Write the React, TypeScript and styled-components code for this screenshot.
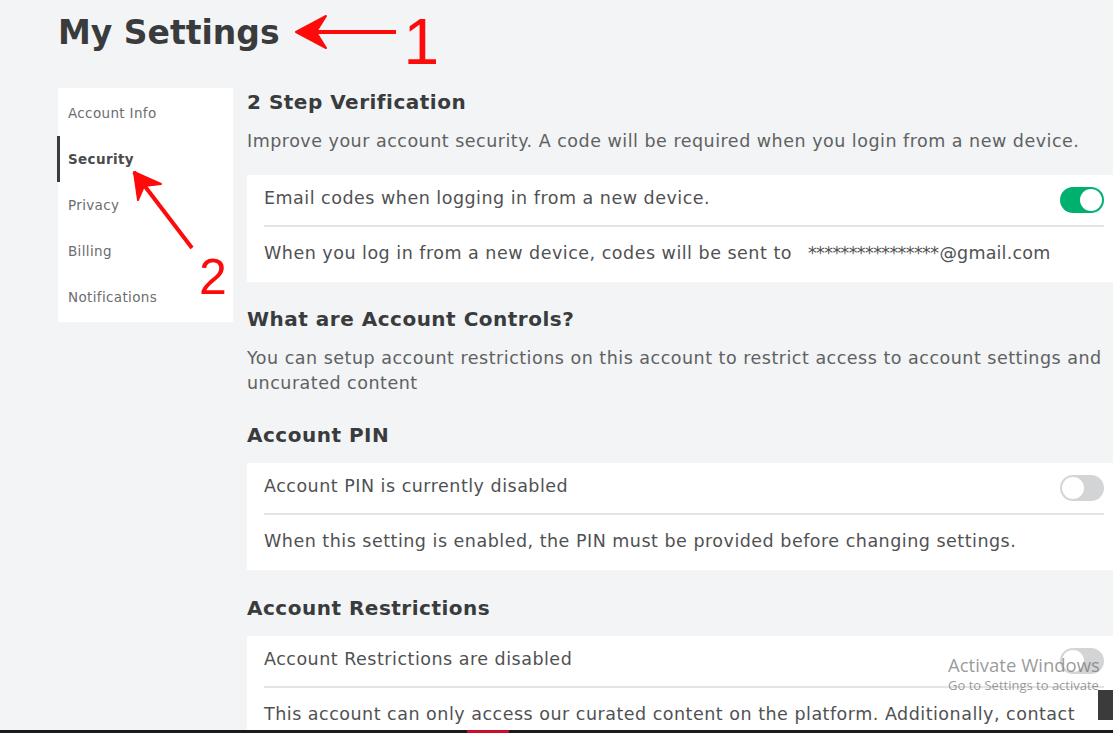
import React from "react";
import styled, { createGlobalStyle } from "styled-components";

const GlobalStyle = createGlobalStyle`
  html, body {
    margin: 0;
    padding: 0;
    background: #f2f4f5;
    overflow: hidden;
  }
  body {
    font-family: "DejaVu Sans", "Noto Sans", Arial, sans-serif;
    color: #393b3d;
  }
`;

const Page = styled.div`
  position: relative;
  width: 1113px;
  height: 733px;
  overflow: hidden;
  padding: 4px 0 0 58px;
  box-sizing: border-box;
`;

const TitleRow = styled.div`
  display: flex;
  align-items: center;
  height: 56px;
`;

const Title = styled.h1`
  margin: 0;
  font-size: 33px;
  font-weight: 700;
  color: #393b3d;
`;

const RedDigit = styled.span<{ size: number }>`
  color: #ff0a0a;
  font-family: "Liberation Sans", Arial, sans-serif;
  font-size: ${(p) => p.size}px;
  line-height: 1;
`;

const Layout = styled.div`
  display: flex;
  align-items: flex-start;
  margin-top: 28px;
  gap: 14px;
`;

const Sidebar = styled.nav`
  position: relative;
  width: 175px;
  background: #ffffff;
  padding: 2px 0;
  flex-shrink: 0;
`;

const NavItem = styled.div<{ active?: boolean }>`
  position: relative;
  height: 46px;
  display: flex;
  align-items: center;
  padding-left: 10px;
  font-size: 13.5px;
  letter-spacing: 0.35px;
  font-weight: ${(p) => (p.active ? 700 : 400)};
  color: ${(p) => (p.active ? "#4a4c4e" : "#6b6d6f")};
  &::before {
    content: "";
    display: ${(p) => (p.active ? "block" : "none")};
    position: absolute;
    left: -1px;
    top: 0;
    width: 3px;
    height: 46px;
    background: #393b3d;
  }
`;

const Content = styled.main`
  width: 870px;
  flex-shrink: 0;
`;

const Heading = styled.h2<{ top: number }>`
  margin: ${(p) => p.top}px 0 0;
  font-size: 20px;
  line-height: 28px;
  font-weight: 700;
  letter-spacing: 0.5px;
  color: #393b3d;
`;

const Description = styled.p`
  margin: 13px 0 0;
  font-size: 17.5px;
  line-height: 25px;
  color: #606162;
  letter-spacing: 0.5px;
`;

const Card = styled.section<{ top: number }>`
  margin-top: ${(p) => p.top}px;
  background: #ffffff;
  padding: 0 13px 0 17px;
`;

const Row = styled.div<{ divided?: boolean }>`
  display: flex;
  align-items: center;
  justify-content: space-between;
  height: ${(p) => (p.divided ? 52 : 55)}px;
  border-bottom: ${(p) => (p.divided ? "2px solid #e3e4e5" : "none")};
  font-size: 17.5px;
  color: #505153;
  letter-spacing: 0.5px;
  padding-bottom: 4px;
  box-sizing: border-box;
  white-space: nowrap;
`;

const Email = styled.span`
  margin-left: 16px;
  letter-spacing: 0.2px;
`;

const Mask = styled.span`
  letter-spacing: -0.6px;
  margin-right: 1px;
`;

const Toggle = styled.div<{ on?: boolean }>`
  position: relative;
  width: 44px;
  height: 26px;
  border-radius: 13px;
  background: ${(p) => (p.on ? "#00b06f" : "#d3d4d5")};
  flex-shrink: 0;
  margin-top: 4px;
  &::after {
    content: "";
    position: absolute;
    top: 2px;
    left: ${(p) => (p.on ? "20px" : "2px")};
    width: 22px;
    height: 22px;
    border-radius: 50%;
    background: #ffffff;
  }
`;

const Annotation = styled.svg`
  position: absolute;
  overflow: visible;
`;

const Watermark = styled.div`
  position: absolute;
  left: 948px;
  top: 653px;
  color: rgba(120, 120, 120, 0.75);
  font-family: "Open Sans", "Noto Sans", sans-serif;
  white-space: nowrap;
`;

const WatermarkTitle = styled.div`
  font-size: 18.5px;
  line-height: 23px;
`;

const WatermarkSub = styled.div`
  font-size: 13px;
  line-height: 18px;
`;

const CornerBox = styled.div`
  position: absolute;
  left: 1098px;
  top: 690px;
  width: 16px;
  height: 30px;
  background: #3b3b3b;
`;

const Taskbar = styled.div`
  position: absolute;
  left: 0;
  bottom: 0;
  width: 100%;
  height: 3px;
  background: #1b1b1b;
  &::after {
    content: "";
    position: absolute;
    left: 467px;
    width: 42px;
    height: 3px;
    background: #c4102a;
  }
`;

const navItems = ["Account Info", "Security", "Privacy", "Billing", "Notifications"];

export default function App() {
  return (
    <Page>
      <GlobalStyle />
      <TitleRow>
        <Title>My Settings</Title>
        <svg width="104" height="40" viewBox="0 0 104 40" style={{ marginLeft: 14 }}>
          <path d="M4 20 L102 20" stroke="#ff0a0a" strokeWidth="4" fill="none" />
          <path d="M32 4 L2 20 L32 36 L22 20 Z" fill="#ff0a0a" stroke="#ff0a0a" strokeWidth="2" strokeLinejoin="round" />
        </svg>
        <RedDigit size={64} style={{ marginLeft: 6, marginTop: 20 }}>1</RedDigit>
      </TitleRow>
      <Layout>
        <Sidebar>
          {navItems.map((item) => (
            <NavItem key={item} active={item === "Security"}>
              {item}
            </NavItem>
          ))}
        </Sidebar>
        <Content>
          <Heading top={0}>2 Step Verification</Heading>
          <Description>
            Improve your account security. A code will be required when you login from a new device.
          </Description>
          <Card top={21}>
            <Row divided>
              Email codes when logging in from a new device.
              <Toggle on />
            </Row>
            <Row>
              <span>
                When you log in from a new device, codes will be sent to
                <Email>
                  <Mask>****************</Mask>@gmail.com
                </Email>
              </span>
            </Row>
          </Card>
          <Heading top={23}>What are Account Controls?</Heading>
          <Description>
            You can setup account restrictions on this account to restrict access to account settings and
            <br />
            uncurated content
          </Description>
          <Heading top={25}>Account PIN</Heading>
          <Card top={14}>
            <Row divided>
              Account PIN is currently disabled
              <Toggle />
            </Row>
            <Row>When this setting is enabled, the PIN must be provided before changing settings.</Row>
          </Card>
          <Heading top={24}>Account Restrictions</Heading>
          <Card top={14}>
            <Row divided>
              Account Restrictions are disabled
              <Toggle />
            </Row>
            <Row>
              This account can only access our curated content on the platform. Additionally, contact
            </Row>
          </Card>
        </Content>
      </Layout>
      <Annotation width="70" height="90" style={{ left: 128, top: 166 }} viewBox="0 0 70 90">
        <path d="M6 6 L64 82" stroke="#ff0a0a" strokeWidth="4" fill="none" />
        <path d="M6 6 L10 34 L16 20 L33 18 Z" fill="#ff0a0a" stroke="#ff0a0a" strokeWidth="2" strokeLinejoin="round" />
      </Annotation>
      <RedDigit size={50} style={{ position: "absolute", left: 199, top: 252 }}>2</RedDigit>
      <Watermark>
        <WatermarkTitle>Activate Windows</WatermarkTitle>
        <WatermarkSub>Go to Settings to activate</WatermarkSub>
      </Watermark>
      <CornerBox />
      <Taskbar />
    </Page>
  );
}
